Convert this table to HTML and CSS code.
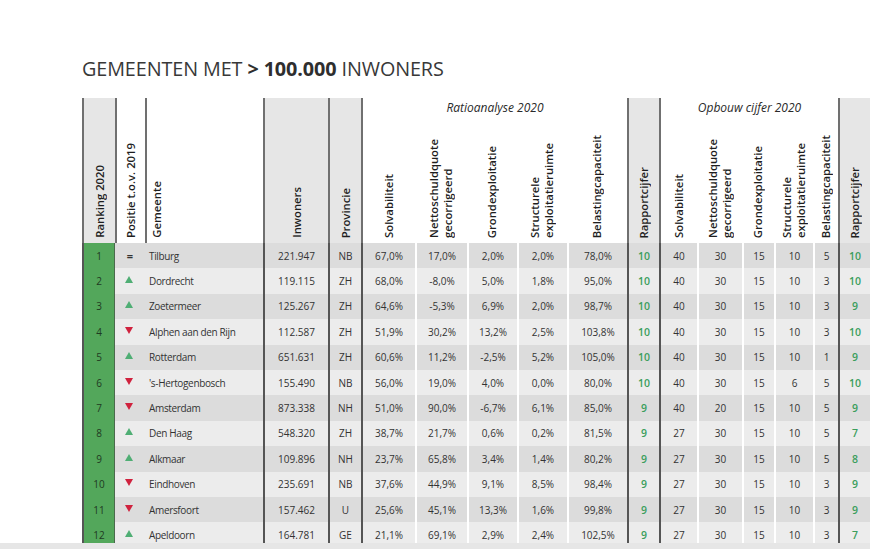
FILE: index.html
```html
<!DOCTYPE html>
<html lang="nl">
<head>
<meta charset="utf-8">
<title>Gemeenten met > 100.000 inwoners</title>
<link rel="stylesheet" href="styles.css">
</head>
<body>
<div class="page">
  <h1 class="title">GEMEENTEN MET <b>&gt; 100.000</b> INWONERS</h1>
  <div class="table">
    <div class="thead">
      <div class="h h-rk gray"><span class="v">Ranking 2020</span></div>
      <div class="h h-pos"><span class="v">Positie t.o.v. 2019</span></div>
      <div class="h h-gm"><span class="v">Gemeente</span></div>
      <div class="h h-inw gray"><span class="v">Inwoners</span></div>
      <div class="h h-prov gray"><span class="v">Provincie</span></div>
      <div class="group g1">Ratioanalyse 2020</div>
      <div class="sh sh-first"><span class="v">Solvabiliteit</span></div>
      <div class="sh"><span class="v">Nettoschuldquote<br>gecorrigeerd</span></div>
      <div class="sh"><span class="v">Grondexploitatie</span></div>
      <div class="sh"><span class="v">Structurele<br>exploitatieruimte</span></div>
      <div class="sh"><span class="v">Belastingcapaciteit</span></div>
      <div class="h h-rc gray"><span class="v">Rapportcijfer</span></div>
      <div class="group g2">Opbouw cijfer 2020</div>
      <div class="sh sh-first"><span class="v">Solvabiliteit</span></div>
      <div class="sh"><span class="v">Nettoschuldquote<br>gecorrigeerd</span></div>
      <div class="sh"><span class="v">Grondexploitatie</span></div>
      <div class="sh"><span class="v">Structurele<br>exploitatieruimte</span></div>
      <div class="sh"><span class="v">Belastingcapaciteit</span></div>
      <div class="h h-rc2 gray"><span class="v">Rapportcijfer</span></div>
    </div>

    <div class="row odd">
      <div class="c rk">1</div><div class="c pos"><span class="eq">=</span></div><div class="c gm">Tilburg</div><div class="c inw">221.947</div><div class="c prov">NB</div>
      <div class="c d">67,0%</div><div class="c w">17,0%</div><div class="c w">2,0%</div><div class="c w">2,0%</div><div class="c w">78,0%</div><div class="c d rc">10</div>
      <div class="c d">40</div><div class="c w">30</div><div class="c w">15</div><div class="c w">10</div><div class="c w">5</div><div class="c d rc">10</div>
    </div>
    <div class="row even">
      <div class="c rk">2</div><div class="c pos"><span class="up"></span></div><div class="c gm">Dordrecht</div><div class="c inw">119.115</div><div class="c prov">ZH</div>
      <div class="c d">68,0%</div><div class="c w">-8,0%</div><div class="c w">5,0%</div><div class="c w">1,8%</div><div class="c w">95,0%</div><div class="c d rc">10</div>
      <div class="c d">40</div><div class="c w">30</div><div class="c w">15</div><div class="c w">10</div><div class="c w">3</div><div class="c d rc">10</div>
    </div>
    <div class="row odd">
      <div class="c rk">3</div><div class="c pos"><span class="up"></span></div><div class="c gm">Zoetermeer</div><div class="c inw">125.267</div><div class="c prov">ZH</div>
      <div class="c d">64,6%</div><div class="c w">-5,3%</div><div class="c w">6,9%</div><div class="c w">2,0%</div><div class="c w">98,7%</div><div class="c d rc">10</div>
      <div class="c d">40</div><div class="c w">30</div><div class="c w">15</div><div class="c w">10</div><div class="c w">3</div><div class="c d rc">9</div>
    </div>
    <div class="row even">
      <div class="c rk">4</div><div class="c pos"><span class="down"></span></div><div class="c gm">Alphen aan den Rijn</div><div class="c inw">112.587</div><div class="c prov">ZH</div>
      <div class="c d">51,9%</div><div class="c w">30,2%</div><div class="c w">13,2%</div><div class="c w">2,5%</div><div class="c w">103,8%</div><div class="c d rc">10</div>
      <div class="c d">40</div><div class="c w">30</div><div class="c w">15</div><div class="c w">10</div><div class="c w">3</div><div class="c d rc">10</div>
    </div>
    <div class="row odd">
      <div class="c rk">5</div><div class="c pos"><span class="up"></span></div><div class="c gm">Rotterdam</div><div class="c inw">651.631</div><div class="c prov">ZH</div>
      <div class="c d">60,6%</div><div class="c w">11,2%</div><div class="c w">-2,5%</div><div class="c w">5,2%</div><div class="c w">105,0%</div><div class="c d rc">10</div>
      <div class="c d">40</div><div class="c w">30</div><div class="c w">15</div><div class="c w">10</div><div class="c w">1</div><div class="c d rc">9</div>
    </div>
    <div class="row even">
      <div class="c rk">6</div><div class="c pos"><span class="down"></span></div><div class="c gm">'s-Hertogenbosch</div><div class="c inw">155.490</div><div class="c prov">NB</div>
      <div class="c d">56,0%</div><div class="c w">19,0%</div><div class="c w">4,0%</div><div class="c w">0,0%</div><div class="c w">80,0%</div><div class="c d rc">10</div>
      <div class="c d">40</div><div class="c w">30</div><div class="c w">15</div><div class="c w">6</div><div class="c w">5</div><div class="c d rc">10</div>
    </div>
    <div class="row odd">
      <div class="c rk">7</div><div class="c pos"><span class="down"></span></div><div class="c gm">Amsterdam</div><div class="c inw">873.338</div><div class="c prov">NH</div>
      <div class="c d">51,0%</div><div class="c w">90,0%</div><div class="c w">-6,7%</div><div class="c w">6,1%</div><div class="c w">85,0%</div><div class="c d rc">9</div>
      <div class="c d">40</div><div class="c w">20</div><div class="c w">15</div><div class="c w">10</div><div class="c w">5</div><div class="c d rc">9</div>
    </div>
    <div class="row even">
      <div class="c rk">8</div><div class="c pos"><span class="up"></span></div><div class="c gm">Den Haag</div><div class="c inw">548.320</div><div class="c prov">ZH</div>
      <div class="c d">38,7%</div><div class="c w">21,7%</div><div class="c w">0,6%</div><div class="c w">0,2%</div><div class="c w">81,5%</div><div class="c d rc">9</div>
      <div class="c d">27</div><div class="c w">30</div><div class="c w">15</div><div class="c w">10</div><div class="c w">5</div><div class="c d rc">7</div>
    </div>
    <div class="row odd">
      <div class="c rk">9</div><div class="c pos"><span class="up"></span></div><div class="c gm">Alkmaar</div><div class="c inw">109.896</div><div class="c prov">NH</div>
      <div class="c d">23,7%</div><div class="c w">65,8%</div><div class="c w">3,4%</div><div class="c w">1,4%</div><div class="c w">80,2%</div><div class="c d rc">9</div>
      <div class="c d">27</div><div class="c w">30</div><div class="c w">15</div><div class="c w">10</div><div class="c w">5</div><div class="c d rc">8</div>
    </div>
    <div class="row even">
      <div class="c rk">10</div><div class="c pos"><span class="down"></span></div><div class="c gm">Eindhoven</div><div class="c inw">235.691</div><div class="c prov">NB</div>
      <div class="c d">37,6%</div><div class="c w">44,9%</div><div class="c w">9,1%</div><div class="c w">8,5%</div><div class="c w">98,4%</div><div class="c d rc">9</div>
      <div class="c d">27</div><div class="c w">30</div><div class="c w">15</div><div class="c w">10</div><div class="c w">3</div><div class="c d rc">9</div>
    </div>
    <div class="row odd">
      <div class="c rk">11</div><div class="c pos"><span class="down"></span></div><div class="c gm">Amersfoort</div><div class="c inw">157.462</div><div class="c prov">U</div>
      <div class="c d">25,6%</div><div class="c w">45,1%</div><div class="c w">13,3%</div><div class="c w">1,6%</div><div class="c w">99,8%</div><div class="c d rc">9</div>
      <div class="c d">27</div><div class="c w">30</div><div class="c w">15</div><div class="c w">10</div><div class="c w">3</div><div class="c d rc">9</div>
    </div>
    <div class="row even">
      <div class="c rk">12</div><div class="c pos"><span class="up"></span></div><div class="c gm">Apeldoorn</div><div class="c inw">164.781</div><div class="c prov">GE</div>
      <div class="c d">21,1%</div><div class="c w">69,1%</div><div class="c w">2,9%</div><div class="c w">2,4%</div><div class="c w">102,5%</div><div class="c d rc">9</div>
      <div class="c d">27</div><div class="c w">30</div><div class="c w">15</div><div class="c w">10</div><div class="c w">3</div><div class="c d rc">7</div>
    </div>
  </div>
  <div class="bottom-bar"></div>
</div>
</body>
</html>
```

FILE: styles.css
```css
* { box-sizing: border-box; }
html, body { margin: 0; padding: 0; }
body {
  width: 870px;
  height: 549px;
  overflow: hidden;
  background: #fff;
  font-family: "Open Sans", "Noto Sans", sans-serif;
  color: #333;
}
.page {
  display: flex;
  flex-direction: column;
  height: 549px;
}
.title {
  margin: 56px 0 16px 82px;
  font-size: 19.8px;
  line-height: 26px;
  font-weight: 400;
  color: #383838;
  letter-spacing: -0.1px;
}
.title b { font-weight: 700; color: #2e2e2e; }

.table {
  margin-left: 82px;
  width: 788px;
  height: 445px;
  overflow: hidden;
  flex: none;
}
.thead, .row {
  display: grid;
  grid-template-columns: 33px 30px 118px 65px 33px 54px 52px 50px 50px 60px 32px 38px 45px 32px 39px 25px 32px;
}
.thead {
  grid-template-rows: 20px 125px;
  height: 145px;
  color: #1e1e1e;
  font-size: 11.3px;
  font-weight: 600;
  line-height: 14px;
}
.h {
  grid-row: 1 / 3;
  display: flex;
  align-items: flex-end;
  justify-content: center;
  padding-bottom: 5px;
  border-left: 2px solid #707070;
}
.h.gray { background: #e6e6e6; }
.h-gm { justify-content: flex-start; padding-left: 3px; }
.sh {
  grid-row: 2;
  display: flex;
  align-items: flex-end;
  justify-content: center;
  padding-bottom: 5px;
}
.sh-first { border-left: 2px solid #707070; }
.v {
  writing-mode: vertical-rl;
  transform: rotate(180deg);
  white-space: nowrap;
}
.group {
  grid-row: 1;
  border-left: 2px solid #707070;
  text-align: center;
  font-style: italic;
  font-weight: 400;
  font-size: 12px;
  line-height: 18px;
  padding-top: 1px;
  color: #2a2a2a;
}
.g1 { grid-column: 6 / 11; }
.g2 { grid-column: 12 / 17; }

.row {
  height: 25.4px;
  font-size: 10px;
  color: #333;
}
.row.odd { background: #dcdcdc; }
.row.even { background: #ececec; }
.c {
  display: flex;
  align-items: center;
  justify-content: center;
  white-space: nowrap;
}
.rk {
  background: #53a75b;
  border-left: 2px solid #555;
  border-right: 1px solid #4a6a4c;
  color: #1f3a22;
}
.gm { justify-content: flex-start; padding-left: 4px; letter-spacing: -0.35px; }
.inw, .prov, .d { border-left: 2px solid #555; }
.w { border-left: 2px solid #fff; }
.rc { color: #3b9e5c; font-weight: 600; font-size: 10.5px; }

.eq { font-weight: 700; font-size: 11px; color: #333; }
.up, .down {
  display: block;
  width: 0;
  height: 0;
  border-left: 4px solid transparent;
  border-right: 4px solid transparent;
  margin-right: 3px;
  margin-top: -3px;
}
.up { border-bottom: 7px solid #4fae74; }
.down { border-top: 7px solid #d0223e; }

.bottom-bar {
  height: 6px;
  background: #e6e6e6;
  flex: none;
}
```
